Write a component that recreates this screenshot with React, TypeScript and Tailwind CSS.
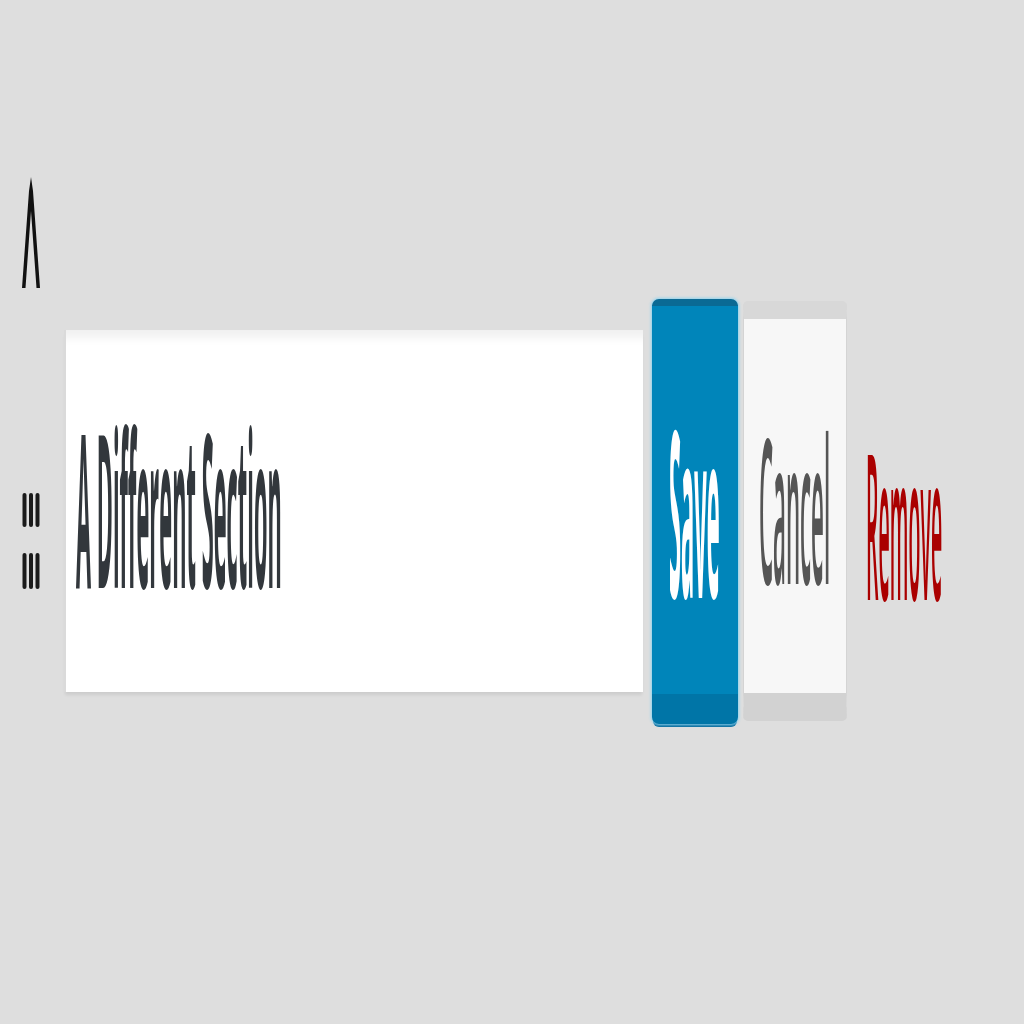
import React from "react";

export default function App() {
  return (
    <div className="w-[1024px] h-[1024px] bg-[#dedede] overflow-hidden flex flex-col pt-[177px] font-['Open_Sans','Liberation_Sans',Arial,sans-serif]">
      <div className="pl-[21px]">
        <svg width="20" height="111" viewBox="0 0 20 111" className="block">
          <polygon points="10,0 12,14 19,111 15.5,111 10,34 4.5,111 1,111 8,14" fill="#111" />
        </svg>
      </div>
      <div className="mt-[10px] flex items-center pl-[22px] h-[426px]">
        <svg width="18" height="426" viewBox="0 0 18 426" className="block shrink-0">
          <g fill="#1a1a1a">
            <rect x="0.5" y="195" width="4" height="34" rx="2" />
            <rect x="7" y="195" width="4" height="34" rx="2" />
            <rect x="13.5" y="195" width="4" height="34" rx="2" />
            <rect x="0.5" y="255" width="4" height="36" rx="2" />
            <rect x="7" y="255" width="4" height="36" rx="2" />
            <rect x="13.5" y="255" width="4" height="36" rx="2" />
          </g>
        </svg>
        <div className="ml-[24px] w-[579px] h-[362px] bg-white flex items-center pl-[10px] border-l-2 border-l-[#dadada] shadow-[inset_0_16px_10px_-8px_rgba(0,0,0,0.06),0_4px_3px_-1px_rgba(0,0,0,0.08)]">
          <div className="w-[208px] shrink-0 overflow-visible mb-[12px]">
            <span className="inline-block origin-left scale-x-[0.102] text-[214px] leading-none font-bold text-[#32373c] whitespace-nowrap">
              A Different Section
            </span>
          </div>
        </div>
        <div className="ml-[9px] w-[86px] h-[425px] rounded-[7px] bg-[#0085ba] border-t-[7px] border-t-[#0a6a94] border-b-[30px] border-b-[#0075a7] shadow-[0_0_3px_1px_#8fd3ef,0_4px_0_-1px_#006799] flex items-center justify-center">
          <div className="w-[52px] shrink-0 mt-[18px]">
            <span className="inline-block origin-left scale-x-[0.095] text-[231px] leading-none font-bold text-white whitespace-nowrap">
              Save
            </span>
          </div>
        </div>
        <div className="ml-[5px] w-[104px] h-[420px] rounded-[5px] bg-[#f7f7f7] border-x border-x-[#d4d4d4] border-t-[18px] border-t-[#d8d8d8] border-b-[28px] border-b-[#d2d2d2] flex items-center justify-center">
          <div className="w-[72px] shrink-0 mt-[0px]">
            <span className="inline-block origin-left scale-x-[0.11] text-[202px] leading-none font-semibold text-[#555] whitespace-nowrap">
              Cancel
            </span>
          </div>
        </div>
        <div className="ml-[19px] w-[77px] shrink-0 mt-[20px]">
          <span className="inline-block origin-left scale-x-[0.096] text-[204px] leading-none font-semibold text-[#a00] whitespace-nowrap">
            Remove
          </span>
        </div>
      </div>
    </div>
  );
}
